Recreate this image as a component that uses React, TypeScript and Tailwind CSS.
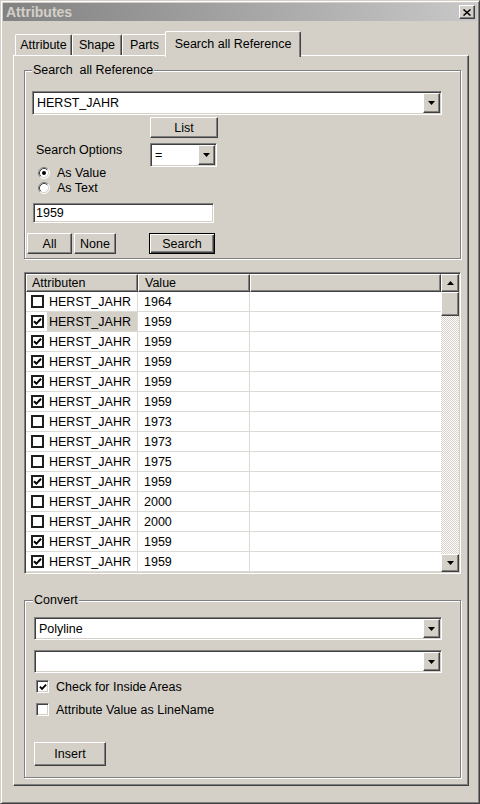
import React from "react";

const RAISED =
  "border border-t-white border-l-white border-r-[#404040] border-b-[#404040] shadow-[inset_-1px_-1px_0_#808080]";
const SUNKEN =
  "border border-t-[#808080] border-l-[#808080] border-r-white border-b-white shadow-[inset_1px_1px_0_#404040,inset_-1px_-1px_0_#d4d0c8]";
const ETCHED = "border border-[#808080] shadow-[inset_1px_1px_0_#ffffff,1px_1px_0_#ffffff]";

function Arrow({ up }: { up?: boolean }) {
  return (
    <svg width="7" height="4" viewBox="0 0 7 4">
      <path d={up ? "M3.5 0 L7 4 L0 4Z" : "M0 0 L7 0 L3.5 4Z"} fill="black" />
    </svg>
  );
}

function Combo({ value, className }: { value: string; className: string }) {
  return (
    <div className={`${SUNKEN} bg-white flex items-stretch p-[1px] ${className}`}>
      <div className="flex-1 flex items-center pl-[3px]">{value}</div>
      <div className={`${RAISED} bg-[#d4d0c8] w-[17px] flex items-center justify-center`}>
        <Arrow />
      </div>
    </div>
  );
}

function Btn({ label, className, def }: { label: string; className: string; def?: boolean }) {
  if (def) {
    return (
      <div
        className={`border border-black bg-[#d4d0c8] shadow-[inset_1px_1px_0_#ffffff,inset_-1px_-1px_0_#404040,inset_-2px_-2px_0_#808080] flex items-center justify-center ${className}`}
      >
        {label}
      </div>
    );
  }
  return (
    <div className={`${RAISED} bg-[#d4d0c8] flex items-center justify-center ${className}`}>{label}</div>
  );
}

function Check({ on, w = 9 }: { on: boolean; w?: number }) {
  if (!on) return null;
  return (
    <svg width={w} height={w} viewBox="0 0 9 9">
      <path d="M1 4.2 L3.4 6.6 L8 1.8" fill="none" stroke="black" strokeWidth="2" />
    </svg>
  );
}

function Radio({ on }: { on: boolean }) {
  return (
    <svg width="12" height="12" viewBox="0 0 12 12">
      <circle cx="6" cy="6" r="5" fill="white" />
      <path d="M9.89 2.11 A5.5 5.5 0 0 0 2.11 9.89" fill="none" stroke="#808080" strokeWidth="1" />
      <path d="M2.11 9.89 A5.5 5.5 0 0 0 9.89 2.11" fill="none" stroke="#ffffff" strokeWidth="1" />
      <path d="M9.18 2.82 A4.5 4.5 0 0 0 2.82 9.18" fill="none" stroke="#404040" strokeWidth="1" />
      <path d="M2.82 9.18 A4.5 4.5 0 0 0 9.18 2.82" fill="none" stroke="#d4d0c8" strokeWidth="1" />
      {on && <circle cx="6" cy="6" r="2" fill="black" />}
    </svg>
  );
}

const rows: [boolean, string][] = [
  [false, "1964"],
  [true, "1959"],
  [true, "1959"],
  [true, "1959"],
  [true, "1959"],
  [true, "1959"],
  [false, "1973"],
  [false, "1973"],
  [false, "1975"],
  [true, "1959"],
  [false, "2000"],
  [false, "2000"],
  [true, "1959"],
  [true, "1959"],
];

export default function App() {
  return (
    <div className="w-[480px] h-[804px] bg-[#d4d0c8] border border-t-[#d4d0c8] border-l-[#d4d0c8] border-r-[#404040] border-b-[#404040] shadow-[inset_1px_1px_0_#ffffff,inset_-1px_-1px_0_#808080] p-[2px] font-['Liberation_Sans',Arial,sans-serif] text-[12.5px] leading-[14px] text-black overflow-hidden">
      {/* Title bar */}
      <div className="h-[18px] bg-linear-to-r from-[#828282] to-[#c8c8c8] flex items-center pl-[3px] pr-[2px]">
        <span className="flex-1 font-bold text-[14px] text-[#d4d0c8]">Attributes</span>
        <div className={`${RAISED} bg-[#d4d0c8] w-[16px] h-[14px] flex items-center justify-center`}>
          <svg width="8" height="7" viewBox="0 0 8 7">
            <path d="M0.5 0.5 L7.5 6.5 M7.5 0.5 L0.5 6.5" stroke="black" strokeWidth="1.5" />
          </svg>
        </div>
      </div>

      {/* Tabs */}
      <div className="mt-[10px] ml-[10px] h-[24px] flex items-end">
        <div className="ml-[2px] w-[57px] h-[21px] border-t border-l border-r border-t-white border-l-white border-r-[#404040] shadow-[inset_-1px_0_0_#808080] rounded-t-[2px] flex items-center justify-center">
          Attribute
        </div>
        <div className="w-[50px] h-[21px] border-t border-l border-r border-t-white border-l-white border-r-[#404040] shadow-[inset_-1px_0_0_#808080] rounded-t-[2px] flex items-center justify-center">
          Shape
        </div>
        <div className="w-[45px] h-[21px] border-t border-l border-r border-t-white border-l-white border-r-[#404040] shadow-[inset_-1px_0_0_#808080] rounded-t-[2px] flex items-center justify-center">
          Parts
        </div>
        <div className="relative z-10 ml-[-2px] -mb-[2px] w-[136px] h-[26px] bg-[#d4d0c8] border-t border-l border-r border-t-white border-l-white border-r-[#404040] shadow-[inset_-1px_0_0_#808080] rounded-t-[2px] flex justify-center pt-[5px]">
          Search all Reference
        </div>
      </div>

      {/* Panel */}
      <div className="ml-[10px] w-[456px] h-[731px] border border-t-white border-l-white border-r-[#404040] border-b-[#404040] shadow-[inset_-1px_-1px_0_#808080] pl-[10px] pt-[14px]">
        {/* Search group */}
        <div className={`relative ${ETCHED} w-[437px] h-[189px] flex flex-col`}>
          <span className="absolute left-[7px] top-[-8px] bg-[#d4d0c8] px-[1px] whitespace-pre">
            Search  all Reference
          </span>
          <Combo value="HERST_JAHR" className="mt-[20px] ml-[7px] w-[410px] h-[24px]" />
          <Btn label="List" className="mt-[2px] ml-[125px] w-[68px] h-[21px]" />
          <div className="mt-[5px] flex">
            <div className="ml-[11px] w-[114px] flex flex-col">
              <div>Search Options</div>
              <div className="mt-[8px] h-[15px] flex items-center ml-[2px] gap-[7px]">
                <Radio on />
                <span>As Value</span>
              </div>
              <div className="h-[15px] flex items-center ml-[2px] gap-[7px]">
                <Radio on={false} />
                <span>As Text</span>
              </div>
            </div>
            <Combo value="=" className="w-[67px] h-[24px]" />
          </div>
          <div className={`${SUNKEN} bg-white mt-[8px] ml-[8px] w-[181px] h-[20px] flex items-center pl-[2px]`}>
            1959
          </div>
          <div className="mt-[10px] flex">
            <Btn label="All" className="ml-[2px] w-[45px] h-[21px]" />
            <Btn label="None" className="ml-[2px] w-[42px] h-[21px]" />
            <Btn label="Search" def className="ml-[33px] w-[66px] h-[21px]" />
          </div>
        </div>

        {/* List view */}
        <div className={`${SUNKEN} bg-white mt-[13px] w-[437px] h-[302px] p-[1px] flex overflow-hidden`}>
          <div className="w-[416px] flex flex-col">
            <div className="flex h-[18px] shrink-0">
              <div className={`${RAISED} bg-[#d4d0c8] w-[112px] flex items-center pl-[5px]`}>Attributen</div>
              <div className={`${RAISED} bg-[#d4d0c8] w-[112px] flex items-center pl-[6px]`}>Value</div>
              <div className={`${RAISED} bg-[#d4d0c8] flex-1`} />
            </div>
            {rows.map(([on, v], i) => (
              <div key={i} className="flex h-[20px] shrink-0">
                <div className="w-[112px] flex items-center border-r border-b border-[#dcdad5]">
                  <div className="ml-[5px] w-[13px] h-[13px] border-2 border-[#1e1e1e] bg-white flex items-center justify-center">
                    <Check on={on} w={9} />
                  </div>
                  <div
                    className={`ml-[3px] pl-[2px] flex-1 h-full flex items-center ${i === 1 ? "bg-[#d4d0c8]" : ""}`}
                  >
                    HERST_JAHR
                  </div>
                </div>
                <div className="w-[112px] flex items-center pl-[6px] border-r border-b border-[#dcdad5]">{v}</div>
                <div className="flex-1 border-b border-[#dcdad5]" />
              </div>
            ))}
          </div>
          <div className="w-[18px] flex flex-col">
            <div className={`${RAISED} bg-[#d4d0c8] h-[18px] shrink-0 flex items-center justify-center`}>
              <Arrow up />
            </div>
            <div className={`${RAISED} bg-[#d4d0c8] h-[24px] shrink-0`} />
            <div className="flex-1 bg-[image:repeating-conic-gradient(#d4d0c8_0_25%,#ffffff_0_50%)] bg-size-[2px_2px]" />
            <div className={`${RAISED} bg-[#d4d0c8] h-[18px] shrink-0 flex items-center justify-center`}>
              <Arrow />
            </div>
          </div>
        </div>

        {/* Convert group */}
        <div className={`relative ${ETCHED} mt-[26px] w-[437px] h-[178px] flex flex-col`}>
          <span className="absolute left-[8px] top-[-8px] bg-[#d4d0c8] px-[1px]">Convert</span>
          <Combo value="Polyline" className="mt-[16px] ml-[9px] w-[408px] h-[23px]" />
          <Combo value="" className="mt-[10px] ml-[9px] w-[408px] h-[23px]" />
          <div className="mt-[7px] ml-[11px] h-[13px] flex items-center">
            <div className={`${SUNKEN} bg-white w-[13px] h-[13px] flex items-center justify-center`}>
              <Check on w={8} />
            </div>
            <span className="ml-[7px]">Check for Inside Areas</span>
          </div>
          <div className="mt-[10px] ml-[11px] h-[13px] flex items-center">
            <div className={`${SUNKEN} bg-white w-[13px] h-[13px]`} />
            <span className="ml-[7px]">Attribute Value as LineName</span>
          </div>
          <Btn label="Insert" className="mt-[26px] ml-[9px] w-[72px] h-[24px]" />
        </div>
      </div>
    </div>
  );
}
